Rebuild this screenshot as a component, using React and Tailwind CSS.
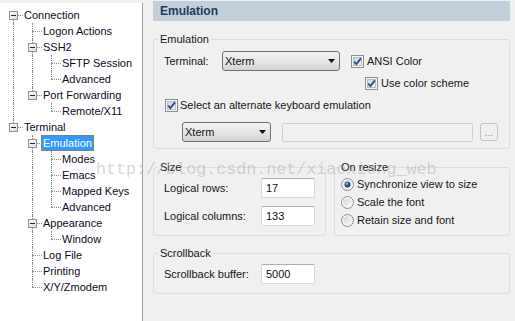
import React from 'react';

const tree = [
  { label: 'Connection', guides: [], box: true, first: true },
  { label: 'Logon Actions', guides: [true] },
  { label: 'SSH2', guides: [true], box: true },
  { label: 'SFTP Session', guides: [true, true] },
  { label: 'Advanced', guides: [true, true], last: true },
  { label: 'Port Forwarding', guides: [true], box: true, last: true },
  { label: 'Remote/X11', guides: [true, false], last: true },
  { label: 'Terminal', guides: [], box: true, last: true },
  { label: 'Emulation', guides: [false], box: true, selected: true },
  { label: 'Modes', guides: [false, true] },
  { label: 'Emacs', guides: [false, true] },
  { label: 'Mapped Keys', guides: [false, true] },
  { label: 'Advanced', guides: [false, true], last: true },
  { label: 'Appearance', guides: [false], box: true },
  { label: 'Window', guides: [false, true], last: true },
  { label: 'Log File', guides: [false] },
  { label: 'Printing', guides: [false] },
  { label: 'X/Y/Zmodem', guides: [false], last: true },
];

const dot = 'border-dotted border-[#8c8c8c]';

function TreeRow({ label, guides, box, first, last, selected }) {
  return (
    <div className="flex h-[16px] items-center">
      {guides.map((g, i) => (
        <span key={i} className="relative h-full w-[19px] shrink-0">
          {g && <span className={`absolute left-[9px] top-0 h-[16px] border-l ${dot}`} />}
        </span>
      ))}
      <span className="relative h-full w-[19px] shrink-0">
        {!first && <span className={`absolute left-[9px] top-0 h-[8px] border-l ${dot}`} />}
        {!last && <span className={`absolute left-[9px] top-[8px] h-[8px] border-l ${dot}`} />}
        <span className={`absolute left-[9px] top-[8px] w-[10px] border-t ${dot}`} />
        {box && (
          <span className="absolute left-[5px] top-[4px] flex h-[9px] w-[9px] items-center justify-center border border-[#929292] bg-gradient-to-br from-white to-[#dcdcdc]">
            <span className="h-px w-[5px] bg-[#1c2a48]" />
          </span>
        )}
      </span>
      <span
        className={
          selected
            ? 'ml-[-1px] h-[16px] whitespace-nowrap bg-[#3399ff] px-[2px] leading-[16px] text-white outline-1 -outline-offset-1 outline-dotted outline-[#b07020]'
            : 'ml-[-1px] h-[16px] whitespace-nowrap px-[2px] leading-[16px] text-[#0c0c24]'
        }
      >
        {label}
      </span>
    </div>
  );
}

function Checkbox({ className = '' }) {
  return (
    <svg width="13" height="13" viewBox="0 0 13 13" className={`shrink-0 ${className}`}>
      <defs>
        <linearGradient id="cbg" x1="0" y1="0" x2="1" y2="1">
          <stop offset="0" stopColor="#cdd1d8" />
          <stop offset="1" stopColor="#f7f7f7" />
        </linearGradient>
      </defs>
      <rect x="0.5" y="0.5" width="12" height="12" fill="#f4f4f4" stroke="#8e8f8f" />
      <rect x="2.5" y="2.5" width="8" height="8" fill="url(#cbg)" stroke="#b8bcc4" />
      <path d="M3.2 6.6 L5.4 9 L9.9 3.4" fill="none" stroke="#2b4a8e" strokeWidth="1.8" />
    </svg>
  );
}

function Radio({ checked }) {
  return (
    <svg width="13" height="13" viewBox="0 0 13 13" className="shrink-0">
      <defs>
        <linearGradient id="rbg" x1="0" y1="0" x2="1" y2="1">
          <stop offset="0" stopColor="#cfd3d9" />
          <stop offset="1" stopColor="#fbfbfb" />
        </linearGradient>
        <radialGradient id="rdot" cx="0.4" cy="0.35" r="0.7">
          <stop offset="0" stopColor="#7db4e2" />
          <stop offset="0.6" stopColor="#1f4f86" />
          <stop offset="1" stopColor="#0f2c55" />
        </radialGradient>
      </defs>
      <circle cx="6.5" cy="6.5" r="6" fill="#f4f4f4" stroke="#8e8f8f" />
      <circle cx="6.5" cy="6.5" r="4.2" fill="url(#rbg)" />
      {checked && <circle cx="6.5" cy="6.5" r="3" fill="url(#rdot)" />}
    </svg>
  );
}

function Select({ className }) {
  return (
    <div
      className={`flex h-[20px] shrink-0 items-center justify-between rounded-[3px] border border-[#707070] bg-gradient-to-b from-[#f3f3f3] via-[#e6e6e6] to-[#d4d4d4] pl-[2px] pr-[4px] ${className}`}
    >
      <span className="text-[#111]">Xterm</span>
      <svg width="7" height="4" viewBox="0 0 7 4">
        <path d="M0 0 H7 L3.5 4 Z" fill="#111" />
      </svg>
    </div>
  );
}

function Field({ value }) {
  return (
    <div className="flex h-[20px] w-[54px] shrink-0 items-center rounded-[2px] border border-[#d6d9e0] border-t-[#abadb3] bg-white pl-[4px] text-[#111]">
      {value}
    </div>
  );
}

function Group({ title, className = '', children }) {
  return (
    <fieldset className={`rounded-[3px] border border-[#d5dfe5] ${className}`}>
      <legend className="ml-[4px] px-[2px] leading-[13px] text-[#161616]">{title}</legend>
      {children}
    </fieldset>
  );
}

export default function App() {
  return (
    <div className="relative flex h-[321px] w-[515px] overflow-hidden bg-[#f0f0f0] font-['Liberation_Sans',Arial,sans-serif] text-[11px] text-[#161616]">
      <div className="mt-[3px] w-[143px] shrink-0 border-r border-[#a0a0a0] bg-white pl-[4px] pt-[4px]">
        {tree.map((n, i) => (
          <TreeRow key={i} {...n} />
        ))}
      </div>

      <div className="ml-[10px] flex w-[357px] flex-col">
        <div className="mt-[1px] flex h-[20px] items-center bg-[#c3d0dc] pl-[7px] text-[12px] font-bold text-[#1f3a5c]">
          Emulation
        </div>

        <Group title="Emulation" className="mt-[12px]">
          <div className="pb-[6px] pl-[10px] pt-[5px]">
            <div className="flex h-[20px] items-center">
              <span className="w-[58px]">Terminal:</span>
              <Select className="w-[118px]" />
              <Checkbox className="ml-[11px]" />
              <span className="ml-[3px]">ANSI Color</span>
            </div>
            <div className="mt-[6px] flex h-[13px] items-center pl-[201px]">
              <Checkbox />
              <span className="ml-[3px]">Use color scheme</span>
            </div>
            <div className="mt-[9px] flex h-[13px] items-center pl-[1px]">
              <Checkbox />
              <span className="ml-[2px]">Select an alternate keyboard emulation</span>
            </div>
            <div className="mt-[10px] flex h-[20px] items-center pl-[18px]">
              <Select className="w-[89px]" />
              <div className="ml-[11px] h-[19px] w-[191px] rounded-[2px] border border-[#cfd1d4] bg-[#f0f0f0]" />
              <div className="ml-[7px] flex h-[18px] w-[18px] items-center justify-center rounded-[3px] border border-[#c6c6c6] leading-none text-[#9a9a9a]">
                ...
              </div>
            </div>
          </div>
        </Group>

        <div className="mt-[12px] flex gap-[8px]">
          <Group title="Size" className="w-[173px]">
            <div className="flex flex-col gap-[8px] pb-[9px] pl-[10px] pt-[4px]">
              <div className="flex items-center">
                <span className="w-[97px]">Logical rows:</span>
                <Field value="17" />
              </div>
              <div className="flex items-center">
                <span className="w-[97px]">Logical columns:</span>
                <Field value="133" />
              </div>
            </div>
          </Group>
          <Group title="On resize" className="flex-1">
            <div className="flex flex-col gap-[5px] pl-[6px] pt-[4px]">
              <div className="flex h-[13px] items-center">
                <Radio checked />
                <span className="ml-[3px]">Synchronize view to size</span>
              </div>
              <div className="flex h-[13px] items-center">
                <Radio />
                <span className="ml-[3px]">Scale the font</span>
              </div>
              <div className="flex h-[13px] items-center">
                <Radio />
                <span className="ml-[3px]">Retain size and font</span>
              </div>
            </div>
          </Group>
        </div>

        <Group title="Scrollback" className="mt-[11px]">
          <div className="flex items-center pb-[9px] pl-[10px] pt-[4px]">
            <span className="w-[97px]">Scrollback buffer:</span>
            <Field value="5000" />
          </div>
        </Group>
      </div>

      <div className="pointer-events-none absolute left-[96px] top-[160px] whitespace-nowrap font-['Liberation_Mono',monospace] text-[16.7px] leading-[20px] text-[#9a9a9a]/40">
        http://blog.csdn.net/xiaoxiong_web
      </div>
    </div>
  );
}
